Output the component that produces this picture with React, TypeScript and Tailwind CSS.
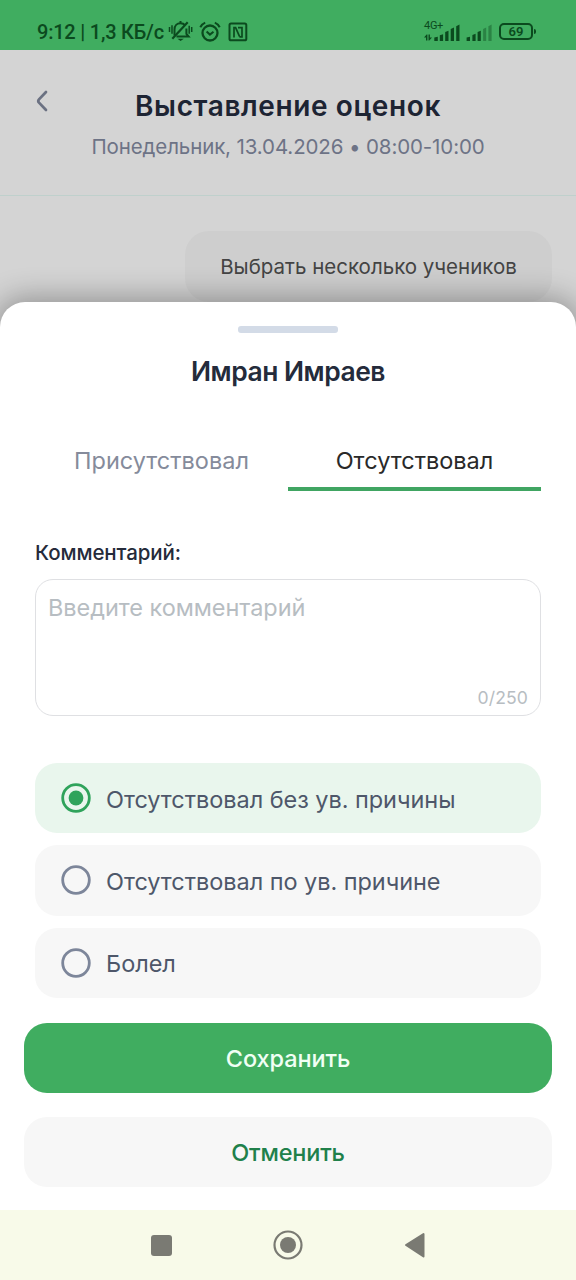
import { useState } from "react";

function MutedBellIcon() {
  return (
    <svg width="25" height="22" viewBox="0 0 25 22" fill="none" stroke="currentColor" strokeWidth="2">
      <path d="M6.500 15.500V9.500C6.500 5.500 9 3.200 12.500 3.200c2 0 3.600.8 4.700 2.100M18.400 8.500v5.500l2.200 2.600H8.500M12.500 1v2" />
      <path d="M19.700 2.200 4.300 18.800" strokeWidth="2.200" />
      <path d="M9.400 18.800h6.400l-3.200 2.200z" fill="currentColor" stroke="none" />
      <path d="M1.500 7v5M4 5.300v8.500M21.200 5.800v8M23.700 7v5" strokeWidth="1.500" />
    </svg>
  );
}

function AlarmIcon() {
  return (
    <svg width="22" height="22" viewBox="0 0 22 22" fill="none" stroke="currentColor" strokeWidth="2">
      <circle cx="11" cy="12" r="7.500" strokeWidth="2.300" />
      <path d="m7.600 10.600 3.300 3 3.600-2.800" />
      <path d="M1.300 6.200C2.400 3.900 4 2.500 6.200 1.600M20.700 6.200c-1.100-2.300-2.700-3.700-4.900-4.600" />
    </svg>
  );
}

function NfcIcon() {
  return (
    <svg width="20" height="20" viewBox="0 0 20 20" fill="none" stroke="currentColor" strokeWidth="2">
      <rect x="1.500" y="1.500" width="16.800" height="16.800" rx="1.600" strokeWidth="2" />
      <path d="M6 15.400V5.700h1.600l3.900 8.600M10 5.600h4v9.200h-2.600" strokeWidth="1.700" />
    </svg>
  );
}

function SignalIcons() {
  return (
    <svg width="69" height="17" viewBox="0 0 69 17" fill="currentColor">
      <path d="M0 13.500 2.600 10.500h.8v6H2v-3zM4.500 10.500h1.400v3H8L5.300 16.500h-.8z" />
      <path d="m10.300 13.600 3.500-.9V17h-3.500zM15.800 11.200l3.300-1V17h-3.300zM21.200 8l3.300-1.200V17h-3.300zM26.700 5l3.300-1.400V17h-3.300zM32.200 2.200 35.500.6V17h-3.300z" />
      <path d="m42.600 13.600 3.400-.9V17h-3.400zM48.400 11l3.200-1.200V17h-3.200zM53.600 8l3.200-1.200V17h-3.200z" />
      <path d="M59.100 5l3.100-1.400V17h-3.100zM64.400 2.200 67.600.6V17h-3.200z" opacity=".42" />
    </svg>
  );
}

function StatusBar() {
  return (
    <div className="flex h-[50px] shrink-0 items-start bg-[#40ad60] pt-5 pl-[37px] text-[#0b4a1e]">
      <span className="w-[131px] pt-px font-['Roboto','Noto_Sans',sans-serif] text-[20px] leading-[23px] font-medium tracking-[-0.22px] whitespace-nowrap">
        9:12 | 1,3 КБ/с
      </span>
      <MutedBellIcon />
      <span className="ml-[6px] pt-px">
        <AlarmIcon />
      </span>
      <span className="ml-[7px] pt-[2px]">
        <NfcIcon />
      </span>
      <span className="relative ml-[176px] flex pt-1">
        <span className="absolute -top-[1px] left-0 font-['Roboto',sans-serif] text-[11px] leading-[14px] tracking-[-0.3px]">4G+</span>
        <SignalIcons />
      </span>
      <span className="ml-[6px] mt-[3px] flex items-center">
        <span className="flex h-[17px] w-[34px] items-center justify-center rounded-[5px] border-2 border-current font-['Roboto',sans-serif] text-[13px] leading-none font-semibold">
          69
        </span>
        <span className="ml-px h-[5px] w-[2px] rounded-r-sm bg-current" />
      </span>
    </div>
  );
}

function Radio({ checked }: { checked: boolean }) {
  return (
    <svg width="30" height="30" viewBox="0 0 30 30" className={checked ? "text-[#2fa35b]" : "text-[#7d869a]"}>
      <circle cx="15" cy="15" r="13.300" fill="none" stroke="currentColor" strokeWidth="2.800" />
      {checked && <circle cx="15" cy="15" r="7.400" fill="currentColor" />}
    </svg>
  );
}

const reasons = [
  "Отсутствовал без ув. причины",
  "Отсутствовал по ув. причине",
  "Болел",
];

export default function App() {
  const [selected, setSelected] = useState(0);
  return (
    <div className="flex h-[1280px] w-[576px] flex-col overflow-hidden bg-[#d4d4d4] font-['Inter','Noto_Sans',sans-serif]">
      <StatusBar />
      <header className="relative flex h-[146px] shrink-0 flex-col items-center border-b border-[#bfd0cc] pt-[38px]">
        <svg className="absolute top-[40px] left-[35px] text-[#6b7182]" width="13" height="22" viewBox="0 0 13 22" fill="none" stroke="currentColor" strokeWidth="2.700" strokeLinecap="round">
          <path d="M11 2 4 9.300q-1.500 1.700 0 3.400l7 7.300" />
        </svg>
        <h1 className="text-[28px] leading-9 font-semibold tracking-[0.6px] text-[#1d2433]">Выставление оценок</h1>
        <p className="mt-[9px] text-[20.5px] leading-7 tracking-[-0.12px] text-[#6d7386]">Понедельник, 13.04.2026 • 08:00-10:00</p>
      </header>
      <div className="flex h-[106px] shrink-0 justify-end pt-[35px] pr-6">
        <div className="flex h-[71px] w-[367px] items-center justify-center rounded-[24px] bg-[#cecece] pt-px text-[20.5px] text-[#444444]">
          Выбрать несколько учеников
        </div>
      </div>
      <main className="relative flex h-[908px] shrink-0 flex-col rounded-t-[25px] bg-white shadow-[0_0_30px_4px_rgba(0,0,0,0.32)]">
        <div className="mt-6 h-[7px] w-[100px] self-center rounded-[3px] bg-[#d3dbe7]" />
        <h2 className="mt-[20px] text-center text-[26.4px] leading-9 font-semibold tracking-[-0.45px] text-[#242b3b]">Имран Имраев</h2>
        <div className="mx-[35px] mt-[44px] grid h-[58px] grid-cols-2 text-[23.5px] leading-[52px]">
          <button className="border-b-4 border-transparent pt-[2px] text-[#858b9b]">Присутствовал</button>
          <button className="border-b-4 border-[#40a562] pt-[2px] text-[#292929]">Отсутствовал</button>
        </div>
        <label className="mx-[35px] mt-[48px] text-[20.5px] leading-7 font-medium tracking-[-0.1px] text-[#252b3a]">Комментарий:</label>
        <div className="mx-[35px] mt-3 flex h-[137px] flex-col justify-between rounded-[18px] border border-[#dfe0e3] px-3 pt-3 pb-[5px] text-[#b7bdc2]">
          <span className="text-[23.5px] leading-8 tracking-[-0.05px]">Введите комментарий</span>
          <span className="self-end text-[17.6px] leading-6 tracking-[0.1px]">0/250</span>
        </div>
        <div className="mx-[35px] mt-[47px] flex flex-col gap-3">
          {reasons.map((reason, i) => (
            <button
              key={reason}
              onClick={() => setSelected(i)}
              className={`flex h-[70.3px] items-center gap-[15px] rounded-[22px] pl-[26px] ${selected === i ? "bg-[#e9f6ed]" : "bg-[#f7f7f7]"}`}
            >
              <Radio checked={selected === i} />
              <span className="pt-[3px] text-[23.5px] leading-8 tracking-[-0.05px] text-[#4e576a]">{reason}</span>
            </button>
          ))}
        </div>
        <button className="mx-6 mt-[25px] h-[70px] shrink-0 rounded-[23px] bg-[#40ad60] pt-[2px] text-[23.5px] font-medium tracking-[-0.1px] text-[#f0fff4]">Сохранить</button>
        <button className="mx-6 mt-6 h-[70px] shrink-0 rounded-[23px] bg-[#f7f7f7] pt-[2px] text-[23.5px] font-medium tracking-[-0.2px] text-[#20804a]">Отменить</button>
      </main>
      <nav className="relative flex h-[70px] shrink-0 items-center bg-[#f8fae9] pl-[151px] text-[#7a7a73]">
        <span className="size-[21px] rounded-[3px] bg-current" />
        <svg className="ml-[101px]" width="30" height="30" viewBox="0 0 30 30">
          <circle cx="15" cy="15" r="13.500" fill="none" stroke="currentColor" strokeWidth="2.200" />
          <circle cx="15" cy="15" r="8" fill="currentColor" />
        </svg>
        <svg className="ml-[101px]" width="21" height="26" viewBox="0 0 21 26" fill="currentColor" stroke="currentColor" strokeWidth="2" strokeLinejoin="round">
          <path d="M19.500 2v22.500L2 13z" />
        </svg>
      </nav>
    </div>
  );
}
